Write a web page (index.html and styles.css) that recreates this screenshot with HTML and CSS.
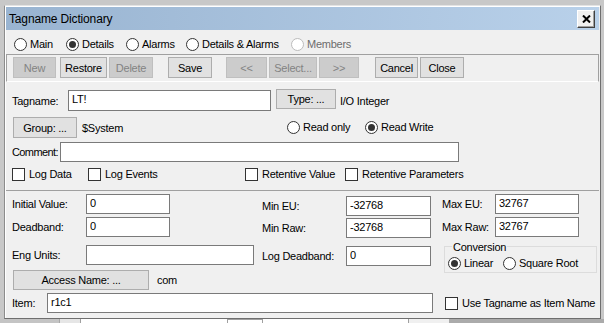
FILE: index.html
```html
<!DOCTYPE html>
<html>
<head>
<meta charset="utf-8">
<title>Tagname Dictionary</title>
<link rel="stylesheet" href="styles.css">
</head>
<body>
<div class="screen">
  <div class="window">
    <div class="titlebar">
      <span class="title">Tagname Dictionary</span>
      <div class="closebtn">
        <svg width="9" height="8" viewBox="0 0 9 8"><path d="M1 0.5 L8 7.5 M8 0.5 L1 7.5" stroke="#000" stroke-width="2" fill="none"/></svg>
      </div>
    </div>

    <div class="tabs">
      <span class="radio w52"><span class="rb"></span><span>Main</span></span>
      <span class="radio w60"><span class="rb on"></span><span>Details</span></span>
      <span class="radio w60"><span class="rb"></span><span>Alarms</span></span>
      <span class="radio w105"><span class="rb"></span><span>Details &amp; Alarms</span></span>
      <span class="radio dis"><span class="rb"></span><span>Members</span></span>
    </div>

    <div class="toolbar">
      <button class="btn dis b-new">New</button>
      <button class="btn b-restore">Restore</button>
      <button class="btn dis b-delete">Delete</button>
      <button class="btn b-save">Save</button>
      <button class="btn dis b-prev">&lt;&lt;</button>
      <button class="btn dis b-select">Select...</button>
      <button class="btn dis b-next">&gt;&gt;</button>
      <button class="btn b-cancel">Cancel</button>
      <button class="btn b-close">Close</button>
    </div>

    <div class="upper">
      <div class="row row-tag">
        <span class="lbl l-tag">Tagname:</span>
        <input class="edit e-tag" type="text" value="LT!">
        <button class="btn b-type">Type: ...</button>
        <span class="typetext">I/O Integer</span>
      </div>
      <div class="row row-group">
        <button class="btn b-group">Group: ...</button>
        <span class="grouptext">$System</span>
        <span class="radio w78"><span class="rb"></span><span>Read only</span></span>
        <span class="radio"><span class="rb on"></span><span>Read Write</span></span>
      </div>
      <div class="row row-comment">
        <span class="lbl l-comment">Comment:</span>
        <input class="edit e-comment" type="text" value="">
      </div>
      <div class="row row-checks">
        <span class="check w76"><span class="cb"></span><span>Log Data</span></span>
        <span class="check w157"><span class="cb"></span><span>Log Events</span></span>
        <span class="check w100"><span class="cb"></span><span>Retentive Value</span></span>
        <span class="check"><span class="cb"></span><span>Retentive Parameters</span></span>
      </div>
    </div>

    <div class="lower">
      <div class="cols">
        <div class="col col-left">
          <div class="row">
            <span class="lbl l-left">Initial Value:</span>
            <input class="edit e-84" type="text" value="0">
          </div>
          <div class="row mt3">
            <span class="lbl l-left">Deadband:</span>
            <input class="edit e-84" type="text" value="0">
          </div>
          <div class="row mt8">
            <span class="lbl l-left">Eng Units:</span>
            <input class="edit e-168" type="text" value="">
          </div>
          <div class="row mt5">
            <button class="btn b-access">Access Name: ...</button>
            <span class="comtext">com</span>
          </div>
        </div>
        <div class="col col-mid">
          <div class="row">
            <span class="lbl l-mid">Min EU:</span>
            <input class="edit e-85" type="text" value="-32768">
          </div>
          <div class="row mt2">
            <span class="lbl l-mid">Min Raw:</span>
            <input class="edit e-85" type="text" value="-32768">
          </div>
          <div class="row mt8">
            <span class="lbl l-mid">Log Deadband:</span>
            <input class="edit e-85" type="text" value="0">
          </div>
        </div>
        <div class="col col-right">
          <div class="row">
            <span class="lbl l-right">Max EU:</span>
            <input class="edit e-84" type="text" value="32767">
          </div>
          <div class="row mt3">
            <span class="lbl l-right">Max Raw:</span>
            <input class="edit e-84" type="text" value="32767">
          </div>
          <div class="group">
            <span class="gtitle">Conversion</span>
            <div class="gradios">
              <span class="radio w55"><span class="rb on"></span><span>Linear</span></span>
              <span class="radio"><span class="rb"></span><span>Square Root</span></span>
            </div>
          </div>
        </div>
      </div>
      <div class="row row-item">
        <span class="lbl l-item">Item:</span>
        <input class="edit e-item" type="text" value="r1c1">
        <span class="check c-use"><span class="cb"></span><span>Use Tagname as Item Name</span></span>
      </div>
    </div>
  </div>

  <div class="strip">
    <div class="s-gray"></div>
    <div class="s-light"></div>
    <div class="s-white"><div class="s-box"></div></div>
    <div class="s-pale"></div>
    <div class="s-dark"></div>
  </div>
</div>
</body>
</html>
```

FILE: styles.css
```css
* { box-sizing: border-box; }
html, body { margin: 0; padding: 0; }
body {
  background: #c8c8c8;
  font-family: "Liberation Sans", Arial, sans-serif;
  font-size: 11px;
  letter-spacing: -0.25px;
  color: #000;
}
.screen {
  width: 604px;
  height: 323px;
  overflow: hidden;
  display: flex;
  flex-direction: column;
}
.window {
  flex: none;
  margin: 5px 0 0 4px;
  width: 597px;
  height: 314px;
  border: 1px solid;
  border-color: #e3e3e3 #6e6e6e #6e6e6e #8c8c8c;
  padding: 1px;
  background: #f0f0f0;
  box-shadow: inset 1px 1px 0 #fff;
  display: flex;
  flex-direction: column;
}

/* title */
.titlebar {
  flex: none;
  height: 23px;
  background: linear-gradient(to right, #99b4d1, #b9d1ea);
  display: flex;
  align-items: center;
  padding-left: 3px;
}
.title {
  font-size: 12px;
  letter-spacing: -0.15px;
  color: #000;
}
.closebtn {
  margin-left: auto;
  margin-right: 4px;
  width: 18px;
  height: 18px;
  background: #f0f0f0;
  border: 1px solid;
  border-color: #fff #404040 #404040 #fff;
  box-shadow: inset -1px -1px 0 #a0a0a0;
  display: flex;
  align-items: center;
  justify-content: center;
}
.closebtn svg { display: block; }

/* radios & checks */
.radio, .check {
  display: flex;
  align-items: center;
  height: 13px;
  line-height: 13px;
  white-space: nowrap;
  flex: none;
}
.rb {
  width: 13px;
  height: 13px;
  border: 1px solid #333;
  border-radius: 50%;
  background: #fff;
  margin-right: 3px;
  display: flex;
  align-items: center;
  justify-content: center;
  flex: none;
}
.rb.on::after {
  content: "";
  width: 7px;
  height: 7px;
  border-radius: 50%;
  background: #333;
}
.radio.dis { color: #6d6d6d; }
.radio.dis .rb { border-color: #bcbcbc; }
.cb {
  width: 13px;
  height: 13px;
  border: 1px solid #333;
  background: #fff;
  margin-right: 4px;
  flex: none;
}
.w52 { width: 52px; }
.w55 { width: 55px; }
.w60 { width: 60px; }
.w76 { width: 76px; }
.w78 { width: 78px; }
.w100 { width: 100px; }
.w105 { width: 105px; }
.w157 { width: 157px; }

.tabs {
  flex: none;
  height: 24px;
  padding: 8px 0 0 8px;
  display: flex;
  align-items: flex-start;
}

/* buttons */
.btn {
  font: inherit;
  letter-spacing: inherit;
  color: #000;
  height: 21px;
  padding: 0;
  margin: 0;
  border: 1px solid #adadad;
  background: #e1e1e1;
  border-radius: 0;
  display: flex;
  align-items: center;
  justify-content: center;
  flex: none;
  white-space: nowrap;
}
.btn.dis {
  background: #cccccc;
  border-color: #bfbfbf;
  color: #838383;
}

.toolbar {
  flex: none;
  height: 28px;
  border: 1px solid #a0a0a0;
  border-bottom-color: #fff;
  padding: 2px 0 0 6px;
  display: flex;
  align-items: flex-start;
}
.b-new { width: 43px; }
.b-restore { width: 47px; margin-left: 4px; }
.b-delete { width: 44px; margin-left: 2px; }
.b-save { width: 44px; margin-left: 15px; }
.b-prev { width: 41px; margin-left: 14px; }
.b-select { width: 48px; margin-left: 2px; }
.b-next { width: 40px; margin-left: 2px; }
.b-cancel { width: 43px; margin-left: 16px; }
.b-close { width: 44px; margin-left: 2px; }

/* edits */
.edit {
  font: inherit;
  letter-spacing: inherit;
  color: #000;
  height: 20px;
  border: 1px solid #7a7a7a;
  background: #fff;
  padding: 0 3px 3px 3px;
  margin: 0;
  outline: none;
  border-radius: 0;
  flex: none;
}

.row {
  display: flex;
  align-items: center;
  height: 20px;
  flex: none;
}
.lbl { flex: none; white-space: nowrap; }
.mt2 { margin-top: 2px; }
.mt3 { margin-top: 3px; }
.mt5 { margin-top: 5px; }
.mt8 { margin-top: 8px; }

/* upper section */
.upper {
  flex: none;
  padding-left: 6px;
}
.row-tag { margin-top: 8px; height: 21px; }
.l-tag { width: 56px; }
.e-tag { width: 203px; height: 21px; }
.b-type { width: 60px; height: 20px; margin-left: 5px; align-self: flex-start; margin-top: -1px; }
.typetext { margin-left: 4px; }

.row-group { margin-top: 6px; height: 21px; }
.b-group { width: 64px; margin-left: 1px; }
.grouptext { width: 205px; margin-left: 5px; flex: none; }

.row-comment { margin-top: 4px; }
.l-comment { width: 48px; letter-spacing: -0.6px; overflow: hidden; }
.e-comment { width: 399px; }

.row-checks { margin-top: 6px; height: 13px; }

/* lower section */
.lower {
  flex: none;
  margin-top: 9px;
  border-top: 1px solid #a0a0a0;
  padding-left: 6px;
}
.cols {
  display: flex;
  align-items: flex-start;
  margin-top: 3px;
}
.col { display: flex; flex-direction: column; flex: none; }
.col-left { width: 250px; }
.col-mid { width: 180px; padding-top: 2px; }
.col-right { width: 155px; }
.l-left { width: 74px; }
.l-mid { width: 84px; }
.l-right { width: 53px; }
.e-84 { width: 84px; }
.e-85 { width: 85px; }
.e-168 { width: 168px; }
.b-access { width: 136px; height: 20px; margin-left: 1px; }
.comtext { margin-left: 8px; }

.group {
  margin: 9px 0 0 2px;
  width: 153px;
  height: 27px;
  border: 1px solid #dcdcdc;
  display: flex;
  flex-direction: column;
  align-items: flex-start;
}
.gtitle {
  margin: -6px 0 0 7px;
  padding: 0 1px;
  height: 13px;
  line-height: 13px;
  background: #f0f0f0;
}
.gradios {
  display: flex;
  margin: 3px 0 0 3px;
}

.row-item { margin-top: 3px; }
.l-item { width: 35px; }
.e-item { width: 386px; }
.c-use { margin-left: 12px; }

/* background strip below dialog */
.strip {
  flex: none;
  height: 5px;
  display: flex;
}
.s-gray { width: 60px; background: #c4c4c4; border-right: 1px solid #a8a8a8; }
.s-light { width: 21px; background: #e6e6e6; border-right: 1px solid #a0a0a0; }
.s-white { width: 328px; background: #fff; border-right: 1px solid #a0a0a0; }
.s-box {
  margin-left: 146px;
  width: 36px;
  height: 5px;
  border: 1px solid #a0a0a0;
  border-bottom: none;
}
.s-pale { width: 40px; background: #f0f0f0; }
.s-dark { flex: 1; background: #ababab; }
```
